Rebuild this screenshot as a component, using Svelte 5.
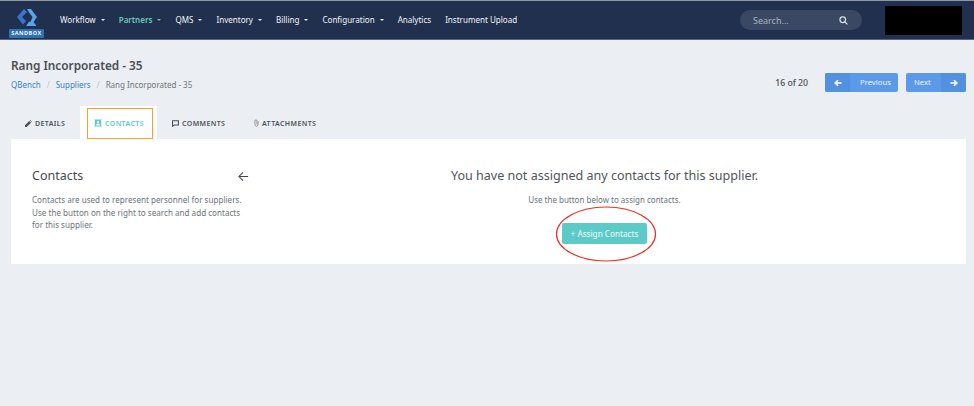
<script>
  const menu = [
    { label: 'Workflow', caret: true },
    { label: 'Partners', caret: true, active: true },
    { label: 'QMS', caret: true },
    { label: 'Inventory', caret: true },
    { label: 'Billing', caret: true },
    { label: 'Configuration', caret: true },
    { label: 'Analytics' },
    { label: 'Instrument Upload' }
  ];
</script>

<div class="page">
  <header class="topbar">
    <div class="brand">
      <svg class="logo" viewBox="0 0 20 18" width="20" height="18">
        <path d="M7 0 L0 8 L6 15.5 L9 12 L5 8 L10 3 Z" fill="#3a74d0" />
        <path d="M10 0 H14 L20 8 L16.5 13 L19.5 17 H9 L12 12.8 H13.5 L15.6 8 L12 3.5 Z" fill="#5ba3e6" />
      </svg>
      <span class="sandbox">SANDBOX</span>
    </div>
    <nav class="menu">
      {#each menu as item}
        <span class="menu-item" class:active={item.active}>
          {item.label}{#if item.caret}<i class="caret"></i>{/if}
        </span>
      {/each}
    </nav>
    <div class="search">
      <span>Search...</span>
      <svg viewBox="0 0 12 12" width="9" height="9" fill="none" stroke="#d5dbe5" stroke-width="1.7">
        <circle cx="5" cy="5" r="3.7" /><path d="M8 8l3.2 3.2" />
      </svg>
    </div>
    <div class="redacted"></div>
  </header>

  <main class="body">
    <div class="heading">
      <div>
        <h1>Rang Incorporated - 35</h1>
        <div class="crumbs">
          <a href="#q">QBench</a><span class="sep">/</span><a href="#s">Suppliers</a><span class="sep">/</span><span>Rang Incorporated - 35</span>
        </div>
      </div>
      <div class="pager">
        <span class="count">16 of 20</span>
        <span class="btn prev">
          <span class="btn-icon"><svg viewBox="0 0 10 10" width="8" height="8" fill="none" stroke="#fff" stroke-width="2"><path d="M9.5 5H1.5M5 1.5L1.5 5L5 8.5" /></svg></span>
          <span class="btn-label">Previous</span>
        </span>
        <span class="btn next">
          <span class="btn-label">Next</span>
          <span class="btn-icon"><svg viewBox="0 0 10 10" width="8" height="8" fill="none" stroke="#fff" stroke-width="2"><path d="M.5 5H8.5M5 1.5L8.5 5L5 8.5" /></svg></span>
        </span>
      </div>
    </div>

    <div class="tabs">
      <span class="tab details">
        <svg viewBox="0 0 10 10" width="7" height="7" fill="#4a5058"><path d="M0 10V7.6L6.2 1.4L8.6 3.8L2.4 10ZM7 .6L7.6 0L10 2.4L9.4 3Z" /></svg>
        DETAILS
      </span>
      <span class="tab contacts">
        <svg viewBox="0 0 10 10" width="8" height="8"><rect x="1" y="1" width="8" height="8" rx="1" fill="#5ccbc7" /><rect x="0" y="0" width="10" height="1" fill="#a5e3e0" /><rect x="0" y="9" width="10" height="1" fill="#a5e3e0" /><circle cx="5" cy="4" r="1.4" fill="#fff" /><path d="M2.5 8c0-3 5-3 5 0Z" fill="#fff" /></svg>
        CONTACTS
        <span class="tab-outline"></span>
      </span>
      <span class="tab comments">
        <svg viewBox="0 0 10 10" width="7" height="7" fill="none" stroke="#4a5058" stroke-width="1.5"><path d="M.8 1h8.4v6.2H3L.8 9Z" /></svg>
        COMMENTS
      </span>
      <span class="tab attachments">
        <svg viewBox="0 0 8 12" width="5" height="8" fill="none" stroke="#6d737b" stroke-width="1.1"><path d="M6.5 3v5.5a2.5 2.5 0 0 1-5 0V2.5a1.6 1.6 0 0 1 3.2 0V8" /></svg>
        ATTACHMENTS
      </span>
    </div>

    <section class="card">
      <div class="intro">
        <div class="intro-head">
          <h2>Contacts</h2>
          <svg viewBox="0 0 12 12" width="11" height="11" fill="none" stroke="#3e444c" stroke-width="1.1"><path d="M11 6H1.2M5.5 1.5L1 6L5.5 10.5" /></svg>
        </div>
        <p>Contacts are used to represent personnel for suppliers. Use the button on the right to search and add contacts for this supplier.</p>
      </div>
      <div class="empty">
        <h3>You have not assigned any contacts for this supplier.</h3>
        <p>Use the button below to assign contacts.</p>
        <span class="assign">
          + Assign Contacts
          <svg class="ring" viewBox="0 0 102 56" width="102" height="56" fill="none"><ellipse cx="51" cy="28" rx="49.5" ry="27" stroke="#ee2f24" stroke-width="1.2" /></svg>
        </span>
      </div>
    </section>
  </main>
</div>

<style>
  :global(body) {
    margin: 0;
    background: #ebeef2;
  }
  .page {
    width: 974px;
    height: 406px;
    overflow: hidden;
    background: #ebeef2;
    font-family: "Noto Sans", "Open Sans", sans-serif;
    color: #4a4f57;
  }
  .topbar {
    display: flex;
    align-items: center;
    height: 38px;
    border-top: 1px solid #8f96a3;
    border-bottom: 1px solid #59657c;
    background: #22304f;
    padding-left: 9px;
    padding-right: 12px;
  }
  .brand {
    display: flex;
    flex-direction: column;
    align-items: center;
    width: 35px;
    padding-top: 7px;
  }
  .logo {
    display: block;
  }
  .sandbox {
    display: block;
    width: 35px;
    height: 9px;
    margin-top: 2px;
    border-radius: 1px;
    background: #2f70b0;
    color: #f0f5fb;
    font-size: 5.5px;
    font-weight: 700;
    letter-spacing: .5px;
    line-height: 9px;
    text-align: center;
  }
  .menu {
    display: flex;
    gap: 14px;
    margin-left: 16px;
    font-size: 8.05px;
    color: #f2f4f7;
    margin-top: -1px;
    white-space: nowrap;
  }
  .menu-item.active {
    color: #63c9b5;
    font-weight: 600;
  }
  .caret {
    display: inline-block;
    margin-left: 5px;
    vertical-align: 2px;
    border-top: 2.5px solid currentColor;
    border-left: 2.5px solid transparent;
    border-right: 2.5px solid transparent;
  }
  .search {
    display: flex;
    align-items: center;
    justify-content: space-between;
    box-sizing: border-box;
    width: 122px;
    height: 20px;
    margin-left: auto;
    padding: 0 14px 0 13px;
    border-radius: 10px;
    background: #3a4863;
    color: #aab2c0;
    font-size: 9px;
  }
  .redacted {
    width: 77px;
    height: 29px;
    margin-left: 23px;
    background: #000;
  }
  .body {
    padding: 0 8px 0 11px;
  }
  .heading {
    display: flex;
    justify-content: space-between;
    align-items: flex-start;
    padding-top: 17px;
  }
  h1 {
    margin: 0;
    font-size: 11.8px;
    line-height: 16px;
    font-weight: 600;
    color: #4a4f57;
  }
  .crumbs {
    margin-top: 6px;
    font-size: 8px;
    line-height: 12px;
    color: #70757d;
  }
  .crumbs a {
    color: #3c83c4;
    text-decoration: none;
  }
  .sep {
    margin: 0 6px;
    color: #c0c4ca;
  }
  .pager {
    display: flex;
    align-items: center;
    margin-top: 16px;
  }
  .count {
    margin-right: 17px;
    font-size: 8.7px;
    font-weight: 500;
    color: #4a4f57;
  }
  .btn {
    display: flex;
    height: 19px;
    border-radius: 2px;
    overflow: hidden;
    background: #5b9ae8;
    color: #eef4fc;
    font-size: 7.7px;
    line-height: 19px;
  }
  .btn-icon {
    display: flex;
    align-items: center;
    justify-content: center;
    width: 25px;
    background: #5290e0;
  }
  .prev {
    width: 73px;
  }
  .prev .btn-label {
    margin-left: 10px;
  }
  .next {
    width: 60px;
    margin-left: 8px;
    justify-content: space-between;
  }
  .next .btn-label {
    margin-left: 8px;
  }
  .tabs {
    display: flex;
    height: 33px;
    margin-top: 14px;
    font-size: 7px;
    font-weight: 600;
    letter-spacing: .4px;
    color: #4e545c;
  }
  .tab {
    display: flex;
    align-items: center;
    gap: 3px;
    padding-top: 1px;
    box-sizing: border-box;
  }
  .details {
    width: 69px;
    padding-left: 14px;
  }
  .contacts {
    position: relative;
    width: 77px;
    padding-left: 14px;
    background: #fff;
    color: #5ccbc7;
  }
  .tab-outline {
    position: absolute;
    top: 2px;
    left: 7px;
    width: 66px;
    height: 31px;
    border: 1.25px solid #f7a131;
    box-sizing: border-box;
  }
  .comments {
    width: 82px;
    padding-left: 15px;
  }
  .attachments {
    padding-left: 15px;
  }
  .card {
    display: flex;
    height: 125px;
    background: #fff;
  }
  .intro {
    width: 217px;
    margin-left: 21px;
    padding-top: 28px;
  }
  .intro-head {
    display: flex;
    align-items: center;
    justify-content: space-between;
  }
  h2 {
    margin: 0;
    font-size: 12.5px;
    line-height: 18px;
    font-weight: 400;
    color: #474c54;
  }
  .intro p {
    margin: 9px 0 0;
    width: 214px;
    font-size: 8.1px;
    line-height: 12.6px;
    color: #6e737b;
  }
  .empty {
    position: relative;
    display: flex;
    flex-direction: column;
    align-items: center;
    flex: 1;
    margin-left: -6px;
    padding-top: 28px;
  }
  h3 {
    margin: 0;
    font-size: 12.55px;
    line-height: 18px;
    font-weight: 400;
    color: #50555c;
  }
  .empty p {
    margin: 9px 0 0;
    font-size: 8px;
    line-height: 12px;
    color: #6e737b;
  }
  .assign {
    position: relative;
    margin-top: 17px;
    width: 85px;
    height: 21px;
    border-radius: 2px;
    background: #5ccbc7;
    color: #f4fcfb;
    font-size: 8.2px;
    line-height: 21px;
    text-align: center;
  }
  .ring {
    position: absolute;
    top: -17px;
    left: -7px;
  }
</style>
